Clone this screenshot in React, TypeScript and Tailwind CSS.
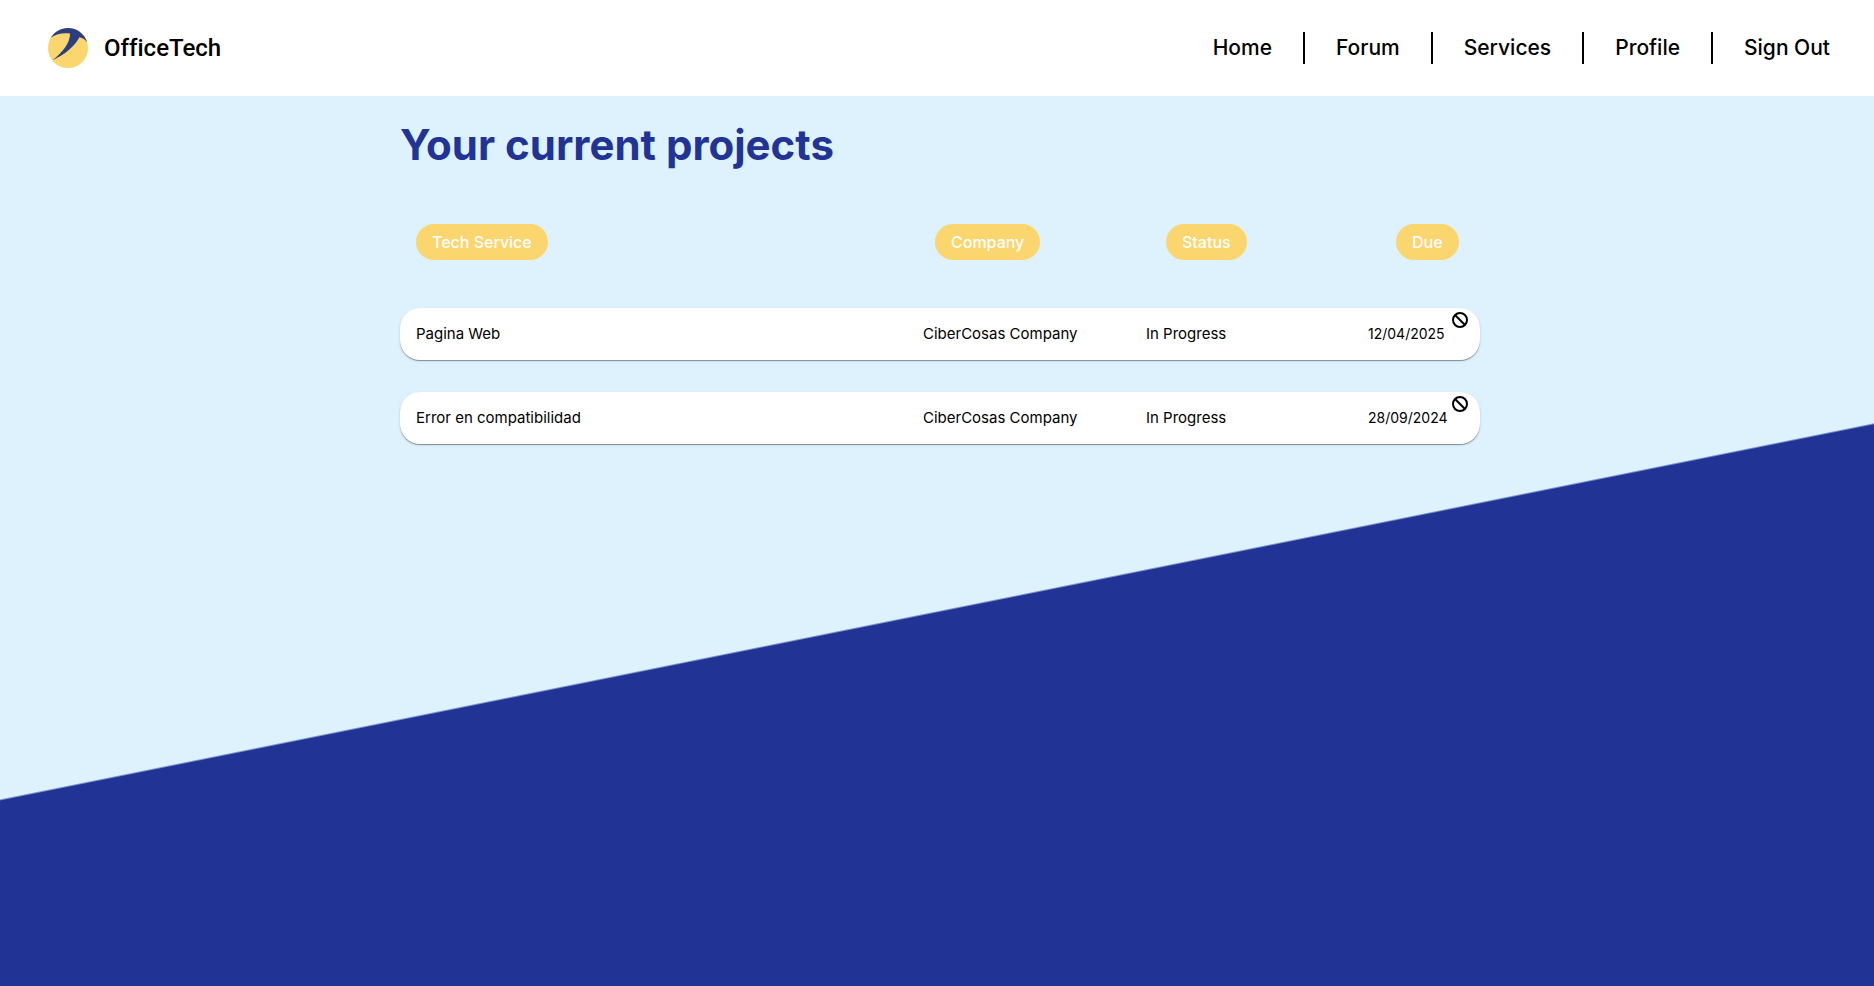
import React from "react";

const links = ["Home", "Forum", "Services", "Profile", "Sign Out"];

const columns = [
  { label: "Tech Service", pad: "pl-4" },
  { label: "Company", pad: "pl-7" },
  { label: "Status", pad: "pl-9" },
  { label: "Due", pad: "pl-11" },
];

const projects = [
  { service: "Pagina Web", company: "CiberCosas Company", status: "In Progress", due: "12/04/2025" },
  { service: "Error en compatibilidad", company: "CiberCosas Company", status: "In Progress", due: "28/09/2024" },
];

const rowGrid = "grid grid-cols-[507fr_223fr_222fr_128fr] items-center";

function Logo() {
  return (
    <svg viewBox="0 0 40 40" className="size-10" aria-hidden="true">
      <circle cx="20" cy="20" r="20" fill="#fbd56e" />
      <path
        d="M2.700 9.800C6.500 3.800 12.800 0 20 0c9 0 16.600 6 19.200 14.400C37.200 11.500 34.800 9.800 31.500 9.200C27 17.500 18 26 4.500 32.200C14.500 24.500 22.300 15 22 5.600C15.500 4.600 8.500 5.800 2.700 9.800Z"
        fill="#2b3f80"
      />
    </svg>
  );
}

function CancelIcon() {
  return (
    <svg viewBox="0 0 16 16" className="size-4" fill="none" stroke="#000" strokeWidth="2" aria-hidden="true">
      <circle cx="8" cy="8" r="7" />
      <path d="M3 3l10 10" />
    </svg>
  );
}

export default function App() {
  return (
    <div className="min-h-screen bg-[linear-gradient(168.65deg,#def2fe_58.65%,#213496_58.8%)] font-[Inter,sans-serif] text-black">
      <header className="flex h-24 items-center justify-between bg-white pr-11 pl-12">
        <a
          href="#home"
          className="flex items-center gap-4 font-[Roboto,sans-serif] text-2xl font-medium [font-variant-ligatures:none]"
        >
          <Logo />
          OfficeTech
        </a>
        <nav>
          <ul className="flex items-center divide-x-2 divide-black text-[21px] leading-8 font-medium">
            {links.map((link) => (
              <li key={link} className="px-[31px] last:pr-0">
                <a href="#section">{link}</a>
              </li>
            ))}
          </ul>
        </nav>
      </header>
      <main className="flex justify-center pt-6 pl-1.5">
        <div className="w-full max-w-[1080px]">
          <h1 className="text-[42px] leading-[50px] font-bold text-[#213496]">Your current projects</h1>
          <table className="mt-[54px] block w-full">
            <thead className="block">
              <tr className={rowGrid}>
                {columns.map((column) => (
                  <th key={column.label} scope="col" className={`${column.pad} flex`}>
                    <span className="rounded-[18px] bg-[#fbd56e] px-4 text-base leading-9 font-medium whitespace-nowrap text-white">
                      {column.label}
                    </span>
                  </th>
                ))}
              </tr>
            </thead>
            <tbody className="flex flex-col gap-8 pt-12 text-[15px]">
              {projects.map((project) => (
                <tr
                  key={project.service}
                  className={`${rowGrid} relative h-[52px] rounded-[20px] bg-white whitespace-nowrap shadow-[0_1px_1px_rgba(0,0,0,0.4),0_1px_4px_rgba(0,0,0,0.06)]`}
                >
                  <td className="px-4">{project.service}</td>
                  <td className="pl-4">{project.company}</td>
                  <td className="pl-4">{project.status}</td>
                  <td className="pl-4 text-sm">
                    {project.due}
                    <button type="button" aria-label="Cancel project" className="absolute top-1 right-3">
                      <CancelIcon />
                    </button>
                  </td>
                </tr>
              ))}
            </tbody>
          </table>
        </div>
      </main>
    </div>
  );
}
